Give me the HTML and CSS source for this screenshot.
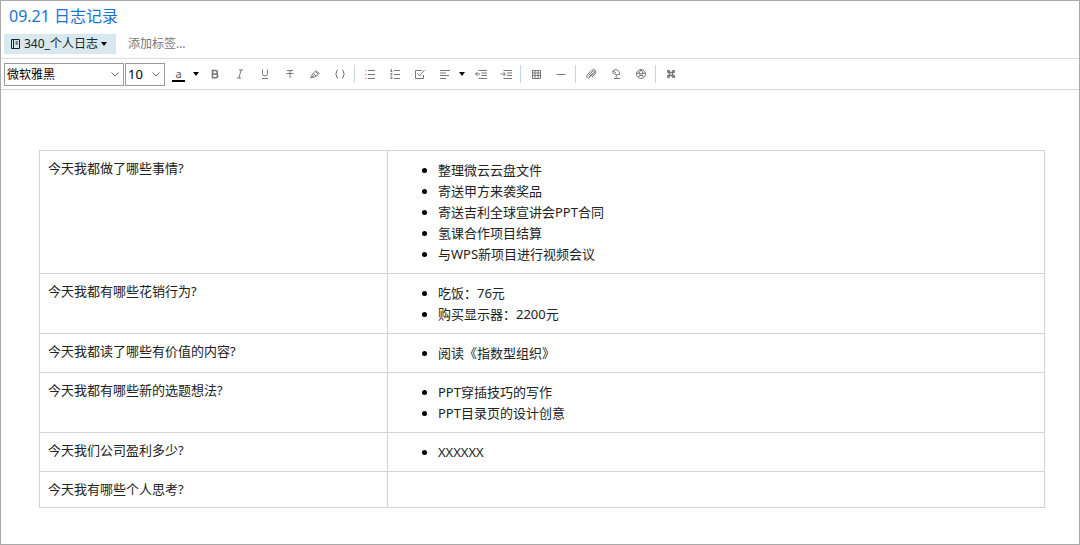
FILE: index.html
```html
<!DOCTYPE html>
<html lang="zh-CN">
<head>
    <meta charset="UTF-8">
    <meta name="viewport" content="width=device-width, initial-scale=1.0">
    <title>09.21 日志记录</title>
    <link rel="stylesheet" href="styles.css">
</head>
<body>
    <header class="note-header">
        <h1>09.21 日志记录</h1>
        <div class="note-meta">
            <button class="notebook" type="button">
                <svg width="10" height="12" viewBox="0 0 10 12" fill="none" stroke="#222"><path d="M.5 1.500h8v9h-8zM2.500 1.500v9M4.500 4h2.500M4.500 6h2.500"/></svg>
                <span>340_个人日志</span>
                <svg class="caret" width="6" height="4" viewBox="0 0 6 4"><path d="M0 0h6L3 4z"/></svg>
            </button>
            <button class="add-tag" type="button">添加标签...</button>
        </div>
    </header>

    <div class="toolbar">
        <div class="select-box font-name">
            <select aria-label="字体"><option>微软雅黑</option></select>
            <svg width="8" height="5" viewBox="0 0 8 5"><path d="M.5.5L4 4L7.500.5"/></svg>
        </div>
        <div class="select-box font-size">
            <select aria-label="字号"><option>10</option></select>
            <svg width="8" height="5" viewBox="0 0 8 5"><path d="M.5.5L4 4L7.500.5"/></svg>
        </div>

        <button class="color" type="button" aria-label="文字颜色"><span>a</span></button>
        <button class="drop" type="button" aria-label="选择颜色"><svg class="caret" width="6" height="4" viewBox="0 0 6 4"><path d="M0 0h6L3 4z"/></svg></button>
        <button class="tool" type="button" aria-label="粗体"><svg viewBox="0 0 12 12"><path stroke-width="1.600" d="M3.500 2.500h3a1.700 1.700 0 0 1 0 3.500h-3zM3.500 6h3.300a1.800 1.800 0 0 1 0 3.700H3.500z"/></svg></button>
        <button class="tool" type="button" aria-label="斜体"><svg viewBox="0 0 12 12"><path d="M5 2h4M3 10h4M7 2L5 10"/></svg></button>
        <button class="tool" type="button" aria-label="下划线"><svg viewBox="0 0 12 12"><path d="M3.500 1.500v4a2.500 2.500 0 0 0 5 0v-4M3 10.500h6"/></svg></button>
        <button class="tool" type="button" aria-label="删除线"><svg viewBox="0 0 12 12"><path d="M3 2.500h6M2.500 5.500h7M6 2.500v7.500"/></svg></button>
        <button class="tool" type="button" aria-label="高亮"><svg viewBox="0 0 12 12"><path d="M1.500 9.500L4 5.500L7 2.500L10 5.500L7.500 8L4.500 9.500zM4.500 5.500L7 8M5.500 7L2 10M7 4l2 2"/></svg></button>
        <button class="tool" type="button" aria-label="代码"><svg viewBox="0 0 12 12"><path d="M4 2Q2.500 2 2.500 4Q2.500 6 1.500 6Q2.500 6 2.500 8Q2.500 10 4 10M8 2Q9.500 2 9.500 4Q9.500 6 10.500 6Q9.500 6 9.500 8Q9.500 10 8 10"/></svg></button>

        <span class="separator"></span>
        <button class="tool" type="button" aria-label="项目符号"><svg viewBox="0 0 12 12"><path d="M4 2.500h7M4 6.500h7M4 10.500h7M1.500 2.500h1M1.500 6.500h1M1.500 10.500h1"/></svg></button>
        <button class="tool" type="button" aria-label="编号"><svg viewBox="0 0 12 12"><path d="M5 2.500h6M5 6.500h6M5 10.500h6M1.500 1.500h1v2M1.500 3.500h2M1.500 5.500h1.500v1.500H1.500M1.500 9h1.500v1.500H1.500"/></svg></button>
        <button class="tool" type="button" aria-label="待办"><svg viewBox="0 0 12 12"><path d="M8 2.500H1.500v8h8V7M3.500 5.500L5.500 8L10.500 2"/></svg></button>
        <button class="tool" type="button" aria-label="对齐"><svg viewBox="0 0 12 12"><path d="M1 2.500h10M1 5h6M1 7.500h9M1 10.500h6"/></svg></button>
        <button class="drop" type="button" aria-label="对齐方式"><svg class="caret" width="6" height="4" viewBox="0 0 6 4"><path d="M0 0h6L3 4z"/></svg></button>
        <button class="tool" type="button" aria-label="减少缩进"><svg viewBox="0 0 12 12"><path d="M3.500 2.500H12M6.500 5H12M6.500 7.500H12M3.500 10.500H12M.5 6H5M2.500 4L.5 6L2.500 8"/></svg></button>
        <button class="tool" type="button" aria-label="增加缩进"><svg viewBox="0 0 12 12"><path d="M3.500 2.500H12M7 5h5M7 7.500h5M3.500 10.500H12M.5 6H5M3.500 4L5.500 6L3.500 8"/></svg></button>

        <span class="separator"></span>
        <button class="tool" type="button" aria-label="表格"><svg viewBox="0 0 12 12"><path d="M2.500 2.500h8v8h-8zM2.500 5h8M2.500 7.500h8M5 2.500v8M8 2.500v8"/></svg></button>
        <button class="tool" type="button" aria-label="分割线"><svg viewBox="0 0 12 12"><path d="M1.500 6.500h9"/></svg></button>

        <span class="separator"></span>
        <button class="tool" type="button" aria-label="附件"><svg viewBox="0 0 12 12"><path d="M3.500 7.500L7.500 3.500Q8.500 2.500 9.300 3.500Q10 4.300 9 5.300L5 9.300Q3.500 10.500 2.200 9.500Q1 8 2.500 6.500L6.500 2.500Q8.500 .800 10.300 2.300Q11.500 4 10 6L7 9M4.500 8.500L8.500 4.500"/></svg></button>
        <button class="tool" type="button" aria-label="录音"><svg viewBox="0 0 12 12"><path d="M3 2.500Q5 1 7.500 2Q10 3.500 9.500 6.500Q6 7.500 3.500 5.500Q2 4 3 2.500L6 5M7 7L6 8.500L7.500 10M4 10.500h6"/></svg></button>
        <button class="tool" type="button" aria-label="截图"><svg viewBox="0 0 12 12"><circle cx="6" cy="6" r="4.500"/><path d="M6 1.500L8 5L6 6L4 5zM1.500 5L5 5.500M10.500 5L7 5.500M3.500 9.500L5 6.500M8.500 9.500L7 6.500M4.500 7.500h3"/></svg></button>

        <span class="separator"></span>
        <button class="tool" type="button" aria-label="快捷键"><svg viewBox="0 0 12 12"><path stroke-width="1.300" d="M4.500 4.500h3v3h-3zM4.500 4.500H3.500a1 1 0 1 1 1-1zM7.500 4.500v-1a1 1 0 1 1 1 1zM7.500 7.500h1a1 1 0 1 1-1 1zM4.500 7.500v1a1 1 0 1 1-1-1z"/></svg></button>
    </div>

    <main>
        <table class="journal">
            <tr>
                <td>今天我都做了哪些事情?</td>
                <td>
                    <ul>
                        <li>整理微云云盘文件</li>
                        <li>寄送甲方来袭奖品</li>
                        <li>寄送吉利全球宣讲会PPT合同</li>
                        <li>氢课合作项目结算</li>
                        <li>与WPS新项目进行视频会议</li>
                    </ul>
                </td>
            </tr>
            <tr>
                <td>今天我都有哪些花销行为?</td>
                <td>
                    <ul>
                        <li>吃饭：76元</li>
                        <li>购买显示器：2200元</li>
                    </ul>
                </td>
            </tr>
            <tr>
                <td>今天我都读了哪些有价值的内容?</td>
                <td>
                    <ul>
                        <li>阅读《指数型组织》</li>
                    </ul>
                </td>
            </tr>
            <tr>
                <td>今天我都有哪些新的选题想法?</td>
                <td>
                    <ul>
                        <li>PPT穿插技巧的写作</li>
                        <li>PPT目录页的设计创意</li>
                    </ul>
                </td>
            </tr>
            <tr>
                <td>今天我们公司盈利多少?</td>
                <td>
                    <ul>
                        <li>XXXXXX</li>
                    </ul>
                </td>
            </tr>
            <tr>
                <td>今天我有哪些个人思考?</td>
                <td></td>
            </tr>
        </table>
    </main>
</body>
</html>
```
FILE: styles.css
```css
* {
    box-sizing: border-box;
}
body {
    margin: 0;
    min-height: 100vh;
    border: 1px solid #a9a9a9;
    background-color: #fff;
    color: #222;
    font-family: "Noto Sans", "Noto Sans CJK SC", sans-serif;
    font-size: 13px;
}
button, select {
    font-family: inherit;
    color: inherit;
    background: none;
    border: none;
    border-radius: 0;
    padding: 0;
    margin: 0;
}
h1 {
    margin: 0;
    padding: 3px 8px 6px;
    color: #1a73d0;
    font-size: 16px;
    font-weight: normal;
    line-height: 24px;
}
.note-meta {
    display: flex;
    align-items: center;
    gap: 12px;
    padding: 0 3px 4px;
}
.notebook {
    display: flex;
    align-items: center;
    gap: 3px;
    height: 20px;
    padding: 0 9px 0 7px;
    background-color: #d9e8ef;
    font-size: 12px;
    line-height: 20px;
}
.add-tag {
    color: #777;
    font-size: 12px;
    line-height: 20px;
}
.caret {
    fill: #000;
}

/* formatting bar */
.toolbar {
    display: flex;
    align-items: center;
    height: 32px;
    padding-left: 3px;
    border-top: 1px solid #dcdcdc;
    border-bottom: 1px solid #d4d4d4;
}
.select-box {
    display: grid;
    align-items: center;
    height: 23px;
    margin-right: 1px;
    border: 1px solid #999;
}
.select-box select,
.select-box svg {
    grid-area: 1 / 1;
}
.select-box select {
    appearance: none;
    width: 100%;
    height: 21px;
    padding-left: 2px;
    color: #000;
}
.select-box svg {
    justify-self: end;
    margin-right: 4px;
    fill: none;
    stroke: #666;
    pointer-events: none;
}
.font-name {
    width: 120px;
}
.font-name select {
    font-size: 12px;
}
.font-size {
    width: 40px;
}
.font-size select {
    font-size: 13px;
}
.color {
    width: 25px;
    padding: 0 6px;
    color: #555;
    font-size: 11px;
    line-height: 13px;
}
.color span {
    display: block;
    border-bottom: 2px solid #000;
}
.drop {
    display: flex;
    justify-content: center;
    width: 10px;
}
.tool {
    display: flex;
    justify-content: center;
    width: 25px;
}
.tool svg {
    width: 12px;
    height: 12px;
    fill: none;
    stroke: #777;
}
.drop + .tool {
    margin-left: 1px;
}
.separator {
    width: 1px;
    height: 18px;
    margin: 0 2px;
    background-color: #c4d9e8;
}

/* note content */
main {
    padding: 60px 34px 30px 38px;
}
.journal {
    width: 100%;
    border-collapse: collapse;
    line-height: 21px;
}
.journal td {
    padding: 7px 8px;
    border: 1px solid #d3d3d3;
    vertical-align: top;
}
.journal td:first-child {
    width: 348px;
}
.journal ul {
    margin: 2px 0 1px;
    padding-left: 42px;
}
.journal li::marker {
    color: #000;
}
```
